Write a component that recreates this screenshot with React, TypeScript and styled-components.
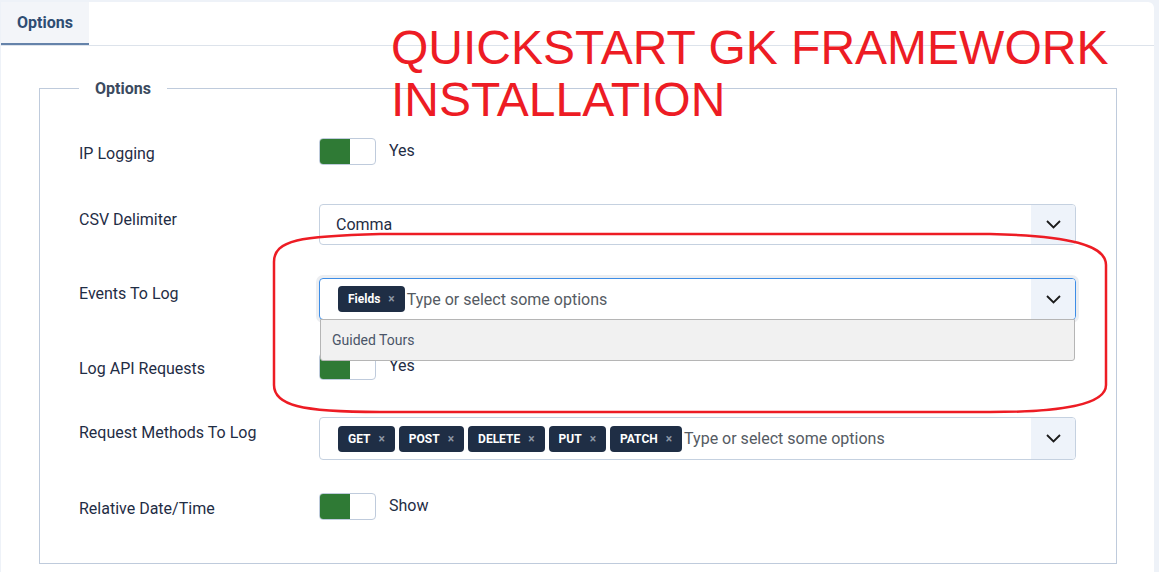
import React from "react";
import styled, { createGlobalStyle } from "styled-components";

const GlobalStyle = createGlobalStyle`
  body {
    margin: 0;
    background: #eef2f8;
    font-family: Roboto, "Noto Sans", sans-serif;
    color: #1f2d45;
  }
`;

const Page = styled.div`
  position: relative;
  height: 572px;
  padding: 2px 5px 0 1px;
  box-sizing: border-box;
  overflow: hidden;
`;

const Card = styled.div`
  background: #fff;
  border-radius: 0 6px 0 0;
  height: 100%;
`;

const TabBar = styled.div`
  display: flex;
  border-bottom: 1px solid #dde3eb;
`;

const Tab = styled.div`
  width: 88px;
  height: 41px;
  display: flex;
  align-items: center;
  justify-content: center;
  background: #f3f5f9;
  border-bottom: 2px solid #6583aa;
  font-size: 16px;
  font-weight: 700;
  color: #2f4d73;
`;

const Body = styled.div`
  padding: 33px 37px 0 38px;
`;

const Fieldset = styled.fieldset`
  margin: 0;
  border: 1px solid #bfcbdc;
  padding: 40px 40px 26px 39px;
  height: 485px;
  box-sizing: border-box;
  display: flex;
  flex-direction: column;
  gap: 33px;
`;

const Legend = styled.legend`
  margin-left: 0;
  padding: 0 16px;
  font-size: 16px;
  font-weight: 700;
  color: #3b4a5e;
`;

const Row = styled.div<{ $min?: number }>`
  display: flex;
  align-items: flex-start;
  min-height: ${p => p.$min ?? 0}px;
`;

const Label = styled.div`
  width: 240px;
  flex-shrink: 0;
  font-size: 16px;
  line-height: 18px;
  padding-top: 7px;
  color: #1f2d45;
`;

const Control = styled.div`
  flex: 1;
  position: relative;
`;

const SwitchWrap = styled.div`
  display: flex;
  align-items: center;
  gap: 13px;
`;

const Switch = styled.div`
  width: 57px;
  height: 27px;
  box-sizing: border-box;
  border: 1px solid #bfcbdc;
  border-radius: 4px;
  overflow: hidden;
  display: flex;
`;

const SwitchOn = styled.span`
  width: 30px;
  background: #2f7a35;
`;

const SwitchText = styled.span`
  font-size: 16px;
  color: #1f2d45;
  margin-top: -3px;
`;

const Select = styled.div<{ $h: number; $focus?: boolean }>`
  height: ${p => p.$h}px;
  box-sizing: border-box;
  border: 1px solid ${p => (p.$focus ? "#3d8de6" : "#c5d1e0")};
  box-shadow: ${p => (p.$focus ? "0 0 0 3px #eceef1" : "none")};
  border-radius: 4px;
  display: flex;
  align-items: center;
  position: relative;
`;

const Value = styled.div`
  flex: 1;
  padding-left: 16px;
  display: flex;
  align-items: center;
  font-size: 16px;
  color: #1f2d45;
`;

const Tags = styled.div`
  flex: 1;
  padding-left: 18px;
  display: flex;
  align-items: center;
  gap: 4px;
`;

const Tag = styled.span`
  height: 26px;
  padding: 0 10px;
  border-radius: 4px;
  background: #1f2e45;
  color: #fff;
  font-size: 12px;
  font-weight: 700;
  display: inline-flex;
  align-items: center;
  gap: 8px;
`;

const TagX = styled.span`
  color: #8d97a5;
  font-size: 12px;
  font-weight: 700;
`;

const Placeholder = styled.span`
  font-size: 16px;
  color: #555b63;
  margin-left: -2px;
`;

const Arrow = styled.div`
  width: 44px;
  align-self: stretch;
  background: #eef3fa;
  border-radius: 0 3px 3px 0;
  display: flex;
  align-items: center;
  justify-content: center;
`;

const Menu = styled.div`
  position: absolute;
  top: 100%;
  left: 0;
  right: 0;
  height: 42px;
  box-sizing: border-box;
  background: #f1f1f1;
  border: 1px solid #b5b5b5;
  border-radius: 0 0 3px 3px;
  display: flex;
  align-items: center;
  padding-left: 11px;
  font-size: 14px;
  color: #4a5568;
  z-index: 2;
`;

const Headline = styled.div`
  position: absolute;
  left: 391px;
  top: 22px;
  font-family: "Liberation Sans", Arial, sans-serif;
  font-size: 48px;
  line-height: 52px;
  color: #ed1c24;
  white-space: nowrap;
  z-index: 3;
`;

const Circle = styled.svg`
  position: absolute;
  left: 0;
  top: 0;
  pointer-events: none;
  z-index: 3;
`;

const Chevron = () => (
  <svg width="15" height="9" viewBox="0 0 15 9">
    <path d="M1 1 L7.5 7.5 L14 1" fill="none" stroke="#1b1b1b" strokeWidth="1.8" />
  </svg>
);

const Toggle = ({ text }: { text: string }) => (
  <SwitchWrap>
    <Switch>
      <SwitchOn />
    </Switch>
    <SwitchText>{text}</SwitchText>
  </SwitchWrap>
);

const methods = ["GET", "POST", "DELETE", "PUT", "PATCH"];

const App = () => {
  return (
    <Page>
      <GlobalStyle />
      <Card>
        <TabBar>
          <Tab>Options</Tab>
        </TabBar>
        <Body>
          <Fieldset>
            <Legend>Options</Legend>
            <Row $min={33}>
              <Label>IP Logging</Label>
              <Control>
                <Toggle text="Yes" />
              </Control>
            </Row>
            <Row>
              <Label>CSV Delimiter</Label>
              <Control>
                <Select $h={41}>
                  <Value>Comma</Value>
                  <Arrow>
                    <Chevron />
                  </Arrow>
                </Select>
              </Control>
            </Row>
            <Row>
              <Label>Events To Log</Label>
              <Control>
                <Select $h={42} $focus>
                  <Tags>
                    <Tag>
                      Fields <TagX>×</TagX>
                    </Tag>
                    <Placeholder>Type or select some options</Placeholder>
                  </Tags>
                  <Arrow>
                    <Chevron />
                  </Arrow>
                  <Menu>Guided Tours</Menu>
                </Select>
              </Control>
            </Row>
            <Row $min={31}>
              <Label>Log API Requests</Label>
              <Control>
                <Toggle text="Yes" />
              </Control>
            </Row>
            <Row>
              <Label>Request Methods To Log</Label>
              <Control>
                <Select $h={43}>
                  <Tags>
                    {methods.map(m => (
                      <Tag key={m}>
                        {m} <TagX>×</TagX>
                      </Tag>
                    ))}
                    <Placeholder>Type or select some options</Placeholder>
                  </Tags>
                  <Arrow>
                    <Chevron />
                  </Arrow>
                </Select>
              </Control>
            </Row>
            <Row>
              <Label>Relative Date/Time</Label>
              <Control>
                <Toggle text="Show" />
              </Control>
            </Row>
          </Fieldset>
        </Body>
      </Card>
      <Headline>
        QUICKSTART GK FRAMEWORK
        <br />
        INSTALLATION
      </Headline>
      <Circle width="1159" height="572" viewBox="0 0 1159 572">
        <path
          d="M274 262 C274 240 300 236 380 234 L990 234 C1070 236 1106 245 1106 265 L1106 385 C1106 405 1060 412 990 412 L380 412 C300 412 274 405 274 385 Z"
          fill="none"
          stroke="#ed1c24"
          strokeWidth="2.5"
        />
      </Circle>
    </Page>
  );
};

export default App;
